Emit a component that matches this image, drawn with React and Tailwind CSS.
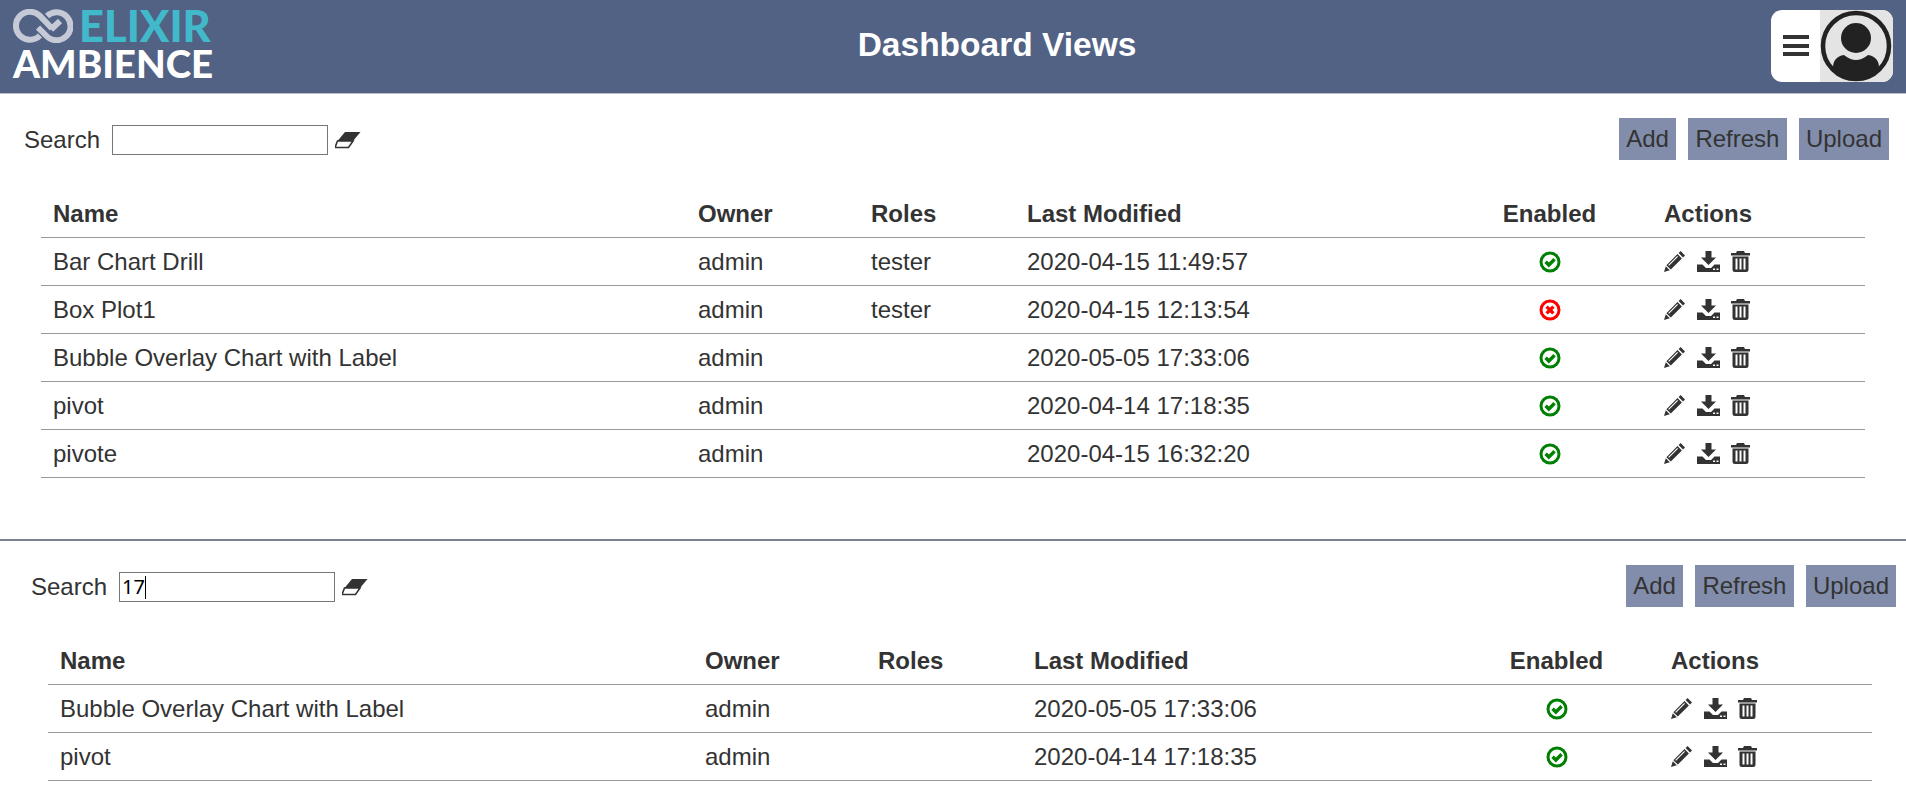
import React from 'react';

const PencilIcon = () => (
  <svg width="21" height="21" viewBox="0 0 21 21" className="fill-[#333] shrink-0">
    <path d="M16.6 0 L21 4.4 L19 6.4 L14.6 2 Z M13.5 3.1 L17.9 7.5 L6.8 18.6 L2.4 14.2 Z M4.2 14 L5 14.8 L14 5.8 L13.2 5 Z M1.8 15.2 L5.8 19.2 L0 21 Z" fillRule="evenodd" />
  </svg>
);

const SaveIcon = () => (
  <svg width="23" height="21" viewBox="0 0 23 21" className="fill-[#333] shrink-0">
    <path d="M8.5 0 H14.5 V6.5 H19 L11.5 14 L4 6.5 H8.5 Z" />
    <path d="M0 13.5 H5.5 L9 17 H14 L17.5 13.5 H23 V21 H0 Z" />
    <rect x="16" y="17.5" width="2" height="1.5" fill="#fff" />
    <rect x="19.5" y="17.5" width="2" height="1.5" fill="#fff" />
  </svg>
);

const TrashIcon = () => (
  <svg width="19" height="21" viewBox="0 0 19 21" className="fill-[#333] shrink-0">
    <path d="M6 0 H13 L14 2 H19 V4.5 H0 V2 H5 Z" />
    <path fillRule="evenodd" d="M1.5 5.5 H17.5 V18.5 Q17.5 21 15 21 H4 Q1.5 21 1.5 18.5 Z M4.5 7.5 V18.5 H6.5 V7.5 Z M8.5 7.5 V18.5 H10.5 V7.5 Z M12.5 7.5 V18.5 H14.5 V7.5 Z" />
  </svg>
);

const OkIcon = () => (
  <svg width="22" height="22" viewBox="0 0 22 22">
    <circle cx="11" cy="11" r="9" fill="none" stroke="#008000" strokeWidth="3" />
    <path d="M6.6 10.8 L9.8 14 L15.6 8.2" fill="none" stroke="#008000" strokeWidth="3.4" />
  </svg>
);

const RemoveIcon = () => (
  <svg width="22" height="22" viewBox="0 0 22 22">
    <circle cx="11" cy="11" r="9" fill="none" stroke="#ff0000" strokeWidth="3" />
    <path d="M7.6 7.6 L14.4 14.4 M14.4 7.6 L7.6 14.4" fill="none" stroke="#ff0000" strokeWidth="3.4" />
  </svg>
);

const EraserIcon = () => (
  <svg width="26" height="18" viewBox="0 0 26 18" className="shrink-0">
    <path d="M10 1 H25.5 L18 10 H2.5 Z" fill="#333" />
    <path d="M2.5 10 H18 L13.5 16.5 H1 Q0 16.5 0.6 15 Z" fill="#fff" stroke="#333" strokeWidth="1.6" />
  </svg>
);

const ElixirLogo = () => (
  <svg width="60" height="34" viewBox="0 0 60 34" className="shrink-0">
    <g fill="none" stroke="#c5cad6" strokeWidth="6">
      <path d="M27 26.5 A14 14 0 1 1 26.5 6.5 L39 19.5" />
      <path d="M34 7 A14 14 0 1 1 33.5 27 L25 18.5" />
      <path d="M38 20.5 L47 12" />
    </g>
  </svg>
);

const AvatarIcon = () => (
  <svg width="73" height="72" viewBox="0 0 73 72" className="block shrink-0">
    <rect width="73" height="72" fill="#e4e4e4" />
    <circle cx="36" cy="36" r="33" fill="none" stroke="#222" strokeWidth="4.5" />
    <circle cx="36" cy="28" r="15" fill="#222" />
    <path d="M13 60 Q12 47 24 45 Q30 50 36 50 Q42 50 48 45 Q60 47 59 60 A33 33 0 0 1 13 60 Z" fill="#222" />
  </svg>
);

const firstRows = [
  { name: 'Bar Chart Drill', owner: 'admin', roles: 'tester', modified: '2020-04-15 11:49:57', enabled: true },
  { name: 'Box Plot1', owner: 'admin', roles: 'tester', modified: '2020-04-15 12:13:54', enabled: false },
  { name: 'Bubble Overlay Chart with Label', owner: 'admin', roles: '', modified: '2020-05-05 17:33:06', enabled: true },
  { name: 'pivot', owner: 'admin', roles: '', modified: '2020-04-14 17:18:35', enabled: true },
  { name: 'pivote', owner: 'admin', roles: '', modified: '2020-04-15 16:32:20', enabled: true },
];

const secondRows = firstRows.filter(r => r.modified.includes('17'));

const cols = 'grid grid-cols-[645px_173px_156px_460px_177px_201px] items-center';

const DashboardPanel = ({ rows, search }) => (
  <div>
    <div className="flex items-center justify-between h-[42px]">
      <div className="flex items-center pt-[2px]">
        <span>Search</span>
        <div className="ml-3 w-[216px] h-[30px] border border-[#767676] flex items-center pl-[2px] text-[20px] font-['Noto_Sans',sans-serif] text-black bg-white leading-none">
          {search}
          {search && <span className="w-px h-[23px] bg-black" />}
        </div>
        <span className="ml-[7px] flex"><EraserIcon /></span>
      </div>
      <div className="flex gap-3">
        <button className="h-[42px] px-[7px] bg-[#818daa]">Add</button>
        <button className="h-[42px] px-[7.5px] bg-[#818daa]">Refresh</button>
        <button className="h-[42px] px-[7px] bg-[#818daa]">Upload</button>
      </div>
    </div>
    <div className="mt-[30px] ml-[17px] w-[1824px]">
      <div className={`${cols} h-[48px] font-bold border-b border-[#999] pl-[12px]`}>
        <div>Name</div>
        <div>Owner</div>
        <div>Roles</div>
        <div>Last Modified</div>
        <div className="text-center pr-[52px] whitespace-nowrap">Enabled</div>
        <div>Actions</div>
      </div>
      {rows.map(row => (
        <div key={row.name} className={`${cols} h-[48px] border-b border-[#999] pl-[12px]`}>
          <div>{row.name}</div>
          <div>{row.owner}</div>
          <div>{row.roles}</div>
          <div>{row.modified}</div>
          <div className="flex justify-center pr-[52px]">{row.enabled ? <OkIcon /> : <RemoveIcon />}</div>
          <div className="flex items-center gap-[11.5px]">
            <PencilIcon />
            <SaveIcon />
            <TrashIcon />
          </div>
        </div>
      ))}
    </div>
  </div>
);

export default function App() {
  return (
    <div className="w-[1906px] h-[788px] overflow-hidden bg-white text-[#333] text-[24px] font-['Liberation_Sans',Arial,sans-serif]">
      <header className="flex items-center justify-between h-[94px] bg-[#516285] border-b border-[#b9bdc8] px-[13px]">
        <div className="w-[200px] self-start pt-[8px]">
          <div className="flex items-center h-[35px]">
            <ElixirLogo />
            <span className="ml-[6px] text-[43.5px] leading-[35px] font-['Lato',sans-serif] font-black text-[#41b9cb]">ELIXIR</span>
          </div>
          <div className="text-[38.5px] leading-[36px] mt-[2px] whitespace-nowrap font-['Lato',sans-serif] font-black text-white">AMBIENCE</div>
        </div>
        <h1 className="ml-[10px] text-[33.5px] font-bold text-white pb-[2px]">Dashboard Views</h1>
        <div className="flex h-[72px] w-[122px] rounded-[11px] overflow-hidden bg-white mb-[2px]">
          <div className="flex-1 flex items-center justify-center pl-[1px]">
            <div className="flex flex-col gap-[4.5px] w-[26px]">
              <span className="h-[4px] bg-[#333]" />
              <span className="h-[4px] bg-[#333]" />
              <span className="h-[4px] bg-[#333]" />
            </div>
          </div>
          <AvatarIcon />
        </div>
      </header>
      <section className="h-[447px] pl-[24px] pr-[17px] pt-[24px] border-b-2 border-[#7b8090]">
        <DashboardPanel rows={firstRows} search="" />
      </section>
      <section className="pl-[31px] pr-[10px] pt-[24px]">
        <DashboardPanel rows={secondRows} search="17" />
      </section>
    </div>
  );
}
